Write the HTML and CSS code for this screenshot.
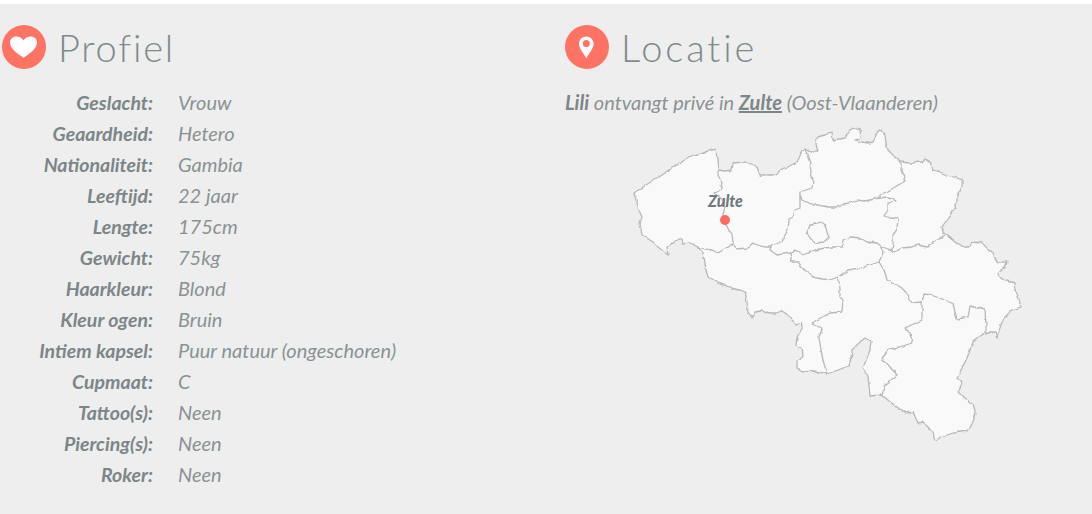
FILE: index.html
```html
<!DOCTYPE html>
<html lang="nl">
<head>
<meta charset="utf-8">
<title>Lili</title>
<link rel="stylesheet" href="styles.css">
</head>
<body>
<main class="page">
  <section class="profile">
    <h2 class="heading heading-narrow">
      <svg class="badge" viewBox="0 0 44 44"><circle cx="22" cy="22" r="22" fill="#ff7364"/><path fill="#fff" d="M21.5 33C17 29 8 24.500 8 17.500 8 14 10.800 11.500 14.500 11.500 17.500 11.500 20 13 21.500 15.500 23 13 25.500 11.500 28.500 11.500 32.200 11.500 35 14 35 17.500 35 24.500 26 29 21.500 33Z"/></svg>
      <span>Profiel</span>
    </h2>
    <dl class="facts">
      <dt>Geslacht:</dt><dd>Vrouw</dd>
      <dt>Geaardheid:</dt><dd>Hetero</dd>
      <dt>Nationaliteit:</dt><dd>Gambia</dd>
      <dt>Leeftijd:</dt><dd>22 jaar</dd>
      <dt>Lengte:</dt><dd>175cm</dd>
      <dt>Gewicht:</dt><dd>75kg</dd>
      <dt>Haarkleur:</dt><dd>Blond</dd>
      <dt>Kleur ogen:</dt><dd>Bruin</dd>
      <dt>Intiem kapsel:</dt><dd>Puur natuur (ongeschoren)</dd>
      <dt>Cupmaat:</dt><dd>C</dd>
      <dt>Tattoo(s):</dt><dd>Neen</dd>
      <dt>Piercing(s):</dt><dd>Neen</dd>
      <dt>Roker:</dt><dd>Neen</dd>
    </dl>
  </section>
  <section class="location">
    <h2 class="heading heading-wide">
      <svg class="badge" viewBox="0 0 44 44"><circle cx="22" cy="22" r="22" fill="#ff7364"/><path fill="#fff" fill-rule="evenodd" d="M21.300 33.500C19 28.500 14 24 14 18.800 14 14.800 17.300 11.600 21.300 11.600 25.300 11.600 28.600 14.800 28.600 18.800 28.600 24 23.600 28.500 21.300 33.500ZM21.300 15.100A3.500 3.500 0 1 0 21.300 22.100 3.500 3.500 0 1 0 21.300 15.100Z"/></svg>
      <span>Locatie</span>
    </h2>
    <p class="intro"><strong>Lili</strong> ontvangt privé in <a href="#">Zulte</a> (Oost-Vlaanderen)</p>
    <svg class="map" viewBox="625 120 405 325">
      <defs>
        <filter id="rough" x="-5%" y="-5%" width="110%" height="110%">
          <feTurbulence type="fractalNoise" baseFrequency="0.14" numOctaves="2" seed="4"/>
          <feDisplacementMap in="SourceGraphic" scale="3.500" xChannelSelector="R" yChannelSelector="G"/>
          <feGaussianBlur stdDeviation="0.350"/>
        </filter>
      </defs>
      <g class="regions">
      <path class="land" d="M634 193 646 185 658 177 675 166 693 155 705 152 716 149 717 160 718 170 725 171 732 170 733 163 745 162 751 164 757 167 760 175 773 175 780 171 788 167 797 162 800 156 802 150 805 149 810 152 818 152 816 144 817 137 825 135 832 132 833 140 845 138 849 132 853 128 860 130 861 138 855 140 862 142 868 143 873 142 876 135 879 130 885 135 886 143 888 150 894 156 900 162 910 163 922 162 925 158 930 162 933 170 940 172 947 175 957 178 962 180 962 187 957 195 957 202 955 208 948 218 942 227 943 232 948 235 951 239 955 242 962 247 970 247 972 242 982 243 987 248 992 252 995 258 998 262 1007 262 1005 268 998 273 1002 280 1015 283 1016 290 1017 293 1021 307 1012 310 1006 316 1002 322 1000 328 998 333 997 338 995 333 985 333 979 337 973 342 970 350 967 358 962 368 957 378 962 383 958 392 964 398 970 403 973 404 976 414 972 424 968 431 960 432 953 433 947 435 943 437 935 440 933 433 928 427 923 422 918 423 913 412 905 413 897 407 889 401 882 395 870 396 869 386 868 376 863 368 867 358 870 350 871 341 865 338 858 344 852 350 851 358 849 366 838 370 827 374 815 371 802 372 797 368 797 360 803 357 802 348 796 345 797 337 803 327 802 323 797 325 792 320 788 315 782 311 776 313 770 313 762 311 755 312 752 318 748 312 747 302 745 292 740 290 732 288 724 285 717 283 708 277 706 270 705 263 703 253 698 247 690 243 683 244 682 238 675 241 667 247 668 255 658 247 653 242 642 235 640 223 642 217 638 208 636 200Z"/>
      <g class="borders">
        <path d="M718 170 718 175 722 183 720 190 714 193 723 200 725 208 722 217 725 225 732 233 733 243 726 248 718 253 712 250 705 249 698 247"/>
        <path d="M733 243 737 249 747 248 753 243 758 245 765 247 771 247 773 245 782 242 785 235 788 230 789 220 793 218 795 210 800 208 800 200 800 192 812 188 813 180 811 172 810 163 805 149"/>
        <path d="M800 196 803 200 813 205 818 205 828 207 838 207 844 204 850 203 858 200 864 201 870 200 880 198 880 195 890 190 905 181 901 170 901 163"/>
        <path d="M880 198 887 197 893 198 895 201 888 203 888 210 884 216 891 218 898 219 897 228 893 235 893 243 892 250 895 252 902 248 912 247 918 245 928 247 933 242 945 235 943 232"/>
        <path d="M771 247 770 250 777 255 790 253 795 250 803 255 815 250 825 248 832 247 842 247 843 240 850 237 860 238 867 242 877 243 882 247 892 250"/>
        <path d="M790 253 792 262 798 262 805 270 813 277 822 279 830 280 838 277 848 270 860 268 870 265 879 262"/>
        <path d="M882 247 883 253 879 262 884 270 887 280 897 285 905 290 908 297 912 303 922 302 924 294 932 295 940 298 947 301 953 303 955 312 957 319 968 317 970 306 985 310 986 325 986 335"/>
        <path d="M838 277 840 288 840 297 843 300 842 312 830 313 822 317 812 323 822 328 819 338 821 350 823 360 827 374"/>
        <path d="M922 302 922 313 922 320 905 328 910 333 912 343 900 347 890 349 882 358 890 367 897 375 885 385 882 395"/>
        <path d="M807 233 810 225 816 224 820 222 825 225 827 232 829 238 825 242 815 243 810 238Z"/>
      </g>
      </g>
      <circle class="pin" cx="725" cy="220" r="5"/>
      <text class="town" x="725.500" y="206.500">Zulte</text>
    </svg>
  </section>
</main>
</body>
</html>
```
FILE: styles.css
```css
* { box-sizing: border-box; }
html, body { margin: 0; height: 100%; }
body {
  background: #eeeeee;
  border-top: 4px solid #ffffff;
  color: #8a9294;
  font-family: Lato, "Open Sans", sans-serif;
  overflow: hidden;
}
.page { display: flex; padding: 21px 0 0 2px; }
.profile { width: 563px; flex: none; }
.location { flex: 1; }
.heading {
  display: flex;
  align-items: center;
  gap: 12px;
  margin: 0;
  height: 44px;
  font-size: 38px;
  font-weight: 300;
  color: #7f8a8d;
}
.heading-narrow { letter-spacing: 1.800px; }
.heading-wide { letter-spacing: 2.900px; }
.badge { width: 44px; height: 44px; flex: none; }
.facts {
  display: grid;
  grid-template-columns: 151px 1fr;
  column-gap: 25px;
  margin: 18px 0 0;
  font-size: 20px;
  line-height: 31px;
  font-style: italic;
}
.facts dt { text-align: right; font-weight: 700; font-size: 19.500px; color: #7c8688; }
.facts dd { margin: 0; }
.intro { margin: 21px 0 0; font-size: 20px; line-height: 24px; font-style: italic; }
.intro strong { color: #7c8688; }
.intro a { color: #7c8688; font-weight: 700; }
.map { display: block; width: 405px; height: 325px; margin: 6px 0 0 60px; }
.regions { filter: url(#rough); }
.land { fill: #f9f9f9; stroke: #b8b8b8; stroke-width: 1.300; stroke-linejoin: round; }
.borders path { fill: none; stroke: #b8b8b8; stroke-width: 1.300; stroke-linejoin: round; }
.pin { fill: #ff6a5e; }
.town {
  font-family: Lato, sans-serif;
  font-size: 16px;
  font-weight: 900;
  font-style: italic;
  text-anchor: middle;
  fill: #6f7a7d;
}
```
